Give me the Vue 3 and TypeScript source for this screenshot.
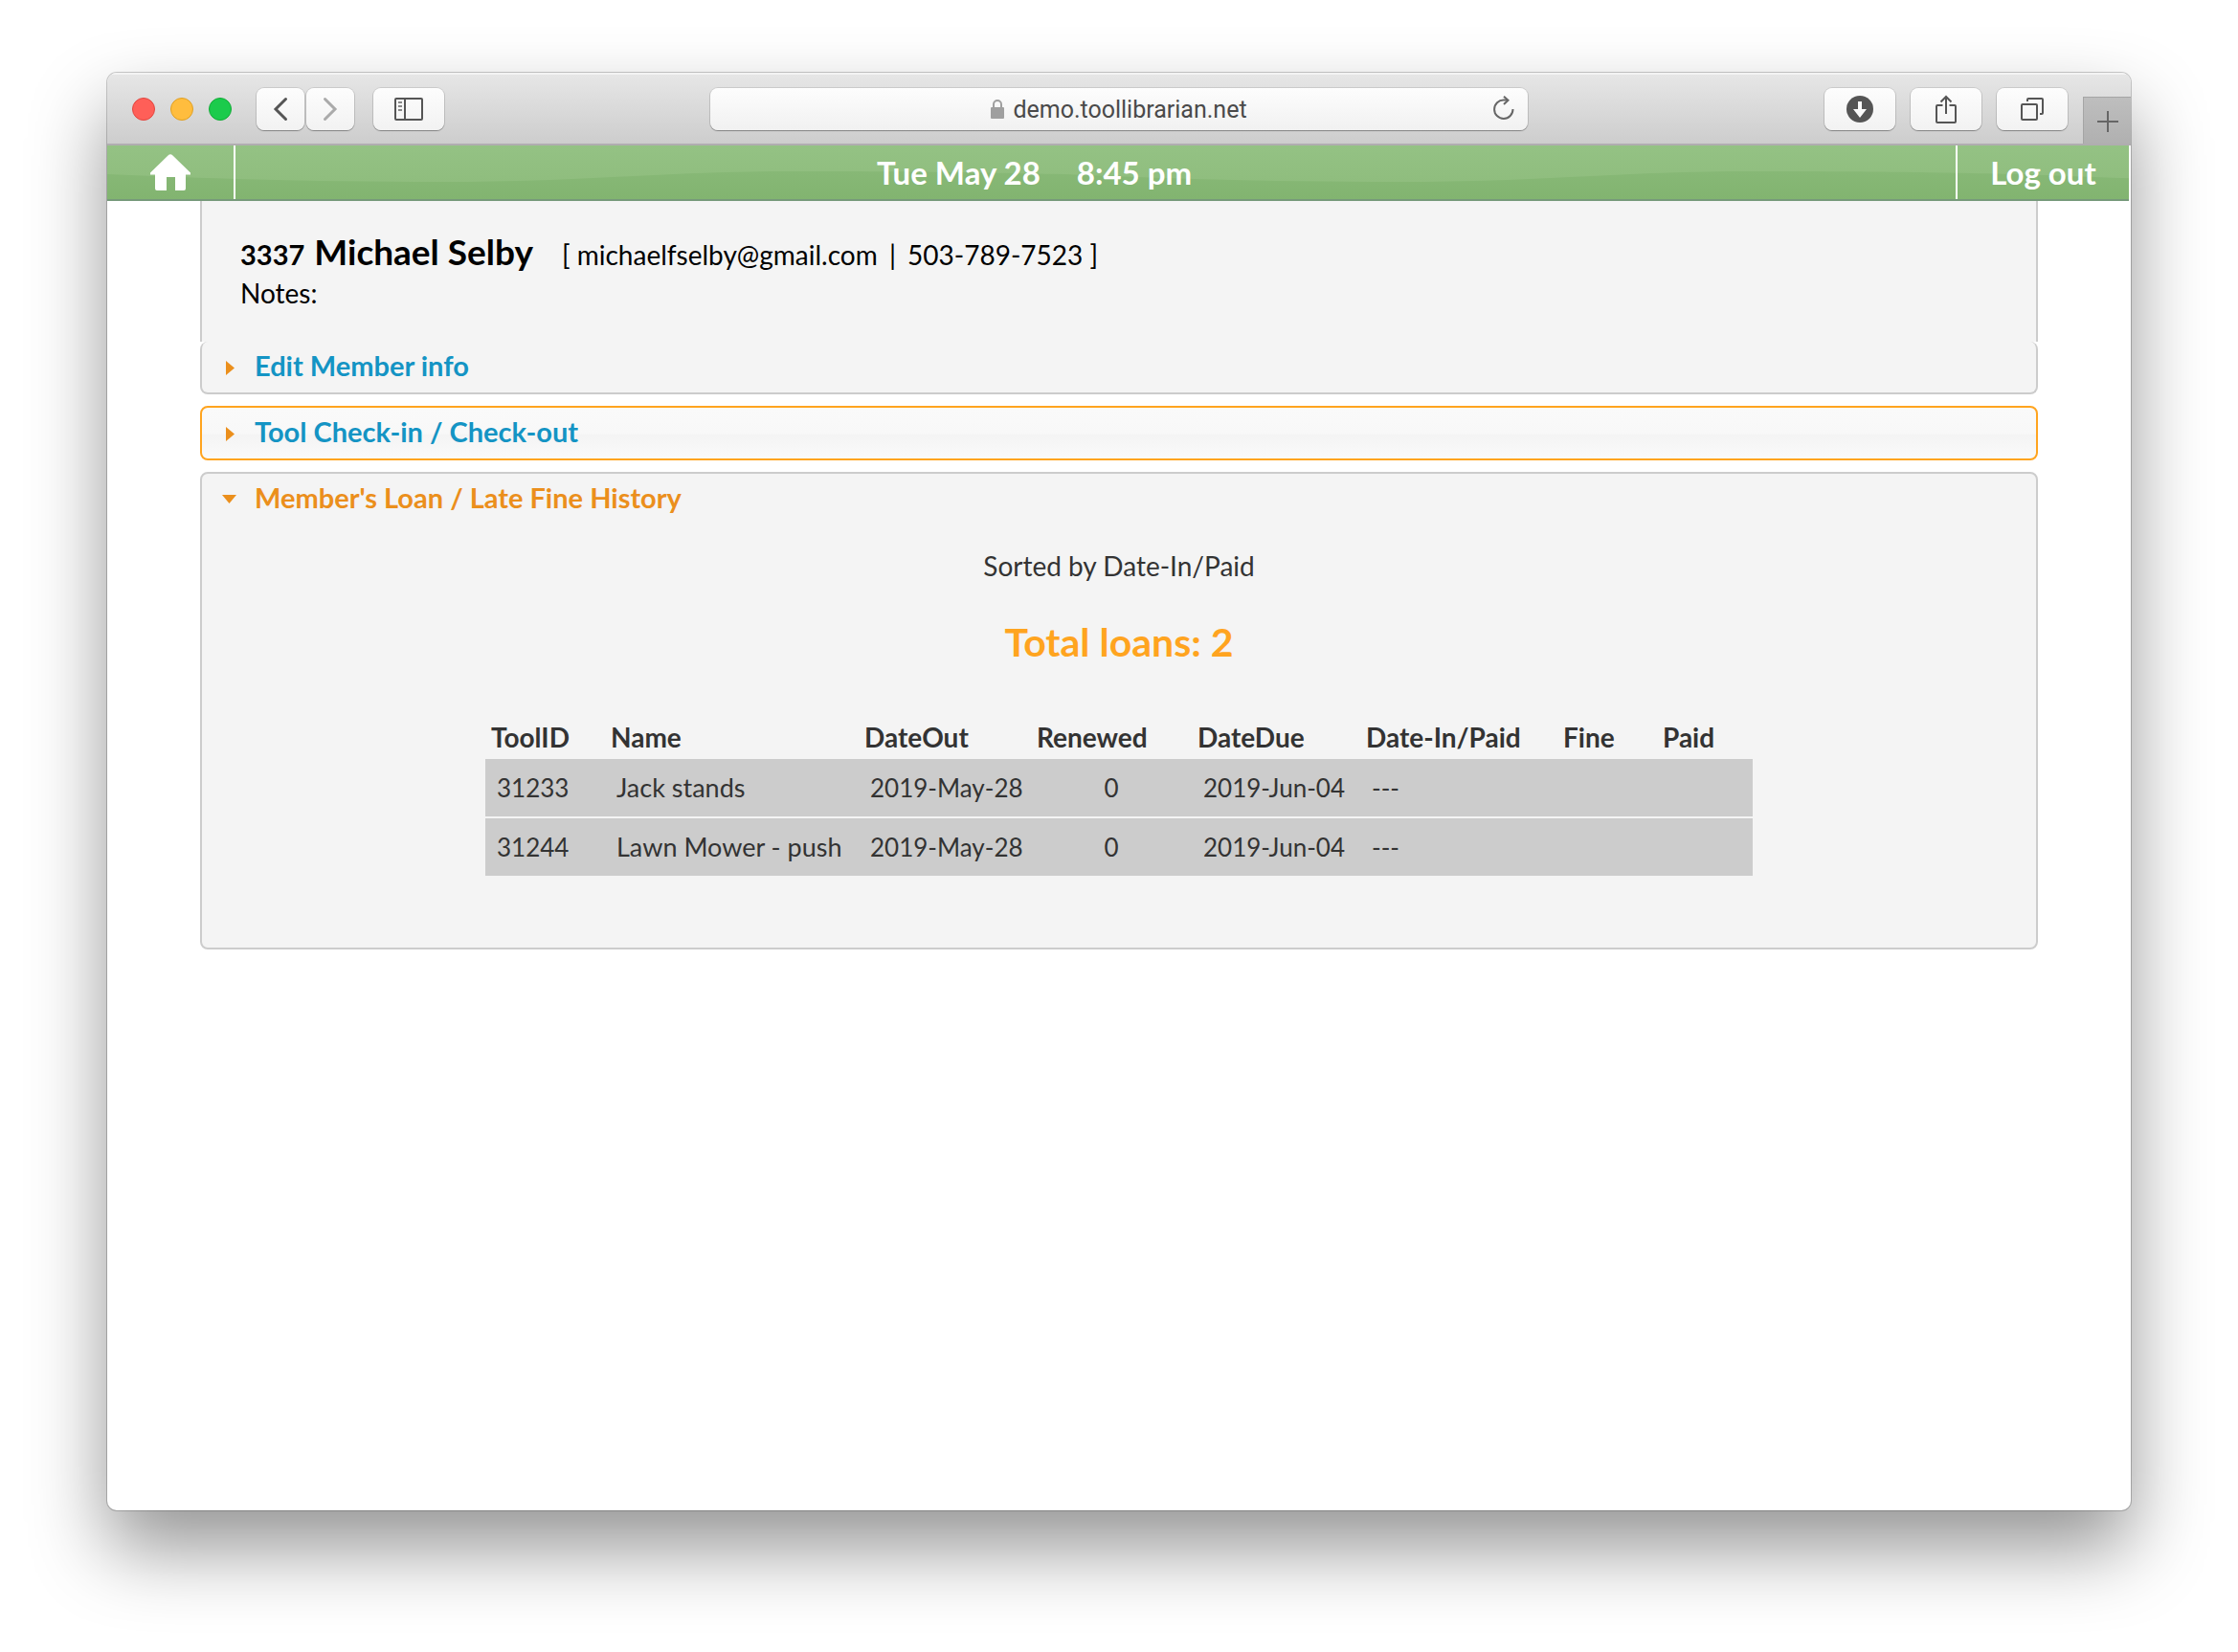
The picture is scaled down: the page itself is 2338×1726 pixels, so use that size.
<script setup lang="ts">
import { ref } from 'vue'

interface Loan {
  id: string
  name: string
  out: string
  renewed: number
  due: string
  returned: string
  fine: string
  paid: string
}

const columns = ['ToolID', 'Name', 'DateOut', 'Renewed', 'DateDue', 'Date-In/Paid', 'Fine', 'Paid']

const loans: Loan[] = [
  { id: '31233', name: 'Jack stands', out: '2019-May-28', renewed: 0, due: '2019-Jun-04', returned: '---', fine: '', paid: '' },
  { id: '31244', name: 'Lawn Mower - push', out: '2019-May-28', renewed: 0, due: '2019-Jun-04', returned: '---', fine: '', paid: '' },
]

const historyOpen = ref(true)
</script>

<template>
  <div class="desktop">
    <div class="window">
      <header class="toolbar">
        <div class="tools tools-left">
          <div class="lights">
            <button class="light red" aria-label="Close window"></button>
            <button class="light yellow" aria-label="Minimize window"></button>
            <button class="light green" aria-label="Zoom window"></button>
          </div>
          <div class="nav">
            <button class="tool narrow" aria-label="Back">
              <svg width="16" height="26" viewBox="0 0 16 26"><path d="M13.5 2.5 3 13l10.5 10.5" fill="none" stroke="#555" stroke-width="3" stroke-linecap="round" /></svg>
            </button>
            <button class="tool narrow" aria-label="Forward">
              <svg width="16" height="26" viewBox="0 0 16 26"><path d="M2.5 2.5 13 13 2.5 23.5" fill="none" stroke="#aaa" stroke-width="3" stroke-linecap="round" /></svg>
            </button>
          </div>
          <button class="tool" aria-label="Show sidebar">
            <svg width="30" height="24" viewBox="0 0 30 24">
              <rect x="1" y="1" width="28" height="22" rx="1" fill="none" stroke="#555" stroke-width="2" />
              <path d="M11 1v22" stroke="#555" stroke-width="2" />
              <path d="M4 5h4M4 9h4M4 13h4" stroke="#888" stroke-width="2" />
            </svg>
          </button>
        </div>

        <div class="address">
          <svg class="lock" width="14" height="22" viewBox="0 0 14 22">
            <path d="M3 9V6a4 4 0 0 1 8 0v3" fill="none" stroke="#9f9f9f" stroke-width="2" />
            <rect x="0" y="9" width="14" height="12" rx="1" fill="#9f9f9f" />
          </svg>
          <span>demo.toollibrarian.net</span>
          <button class="reload" aria-label="Reload page">
            <svg width="24" height="26" viewBox="0 0 24 26">
              <path d="M21.5 14A9.7 9.7 0 1 1 12 4.5h4" fill="none" stroke="#666" stroke-width="2" />
              <path d="M12 .8 16.5 4.8 12 9" fill="none" stroke="#666" stroke-width="2" />
            </svg>
          </button>
        </div>

        <div class="tools tools-right">
          <button class="tool" aria-label="Downloads">
            <svg width="28" height="28" viewBox="0 0 28 28">
              <circle cx="14" cy="14" r="14" fill="#555" />
              <path d="M12 6h4v8h5l-7 9-7-9h5z" fill="#fafafa" />
            </svg>
          </button>
          <button class="tool" aria-label="Share">
            <svg width="22" height="30" viewBox="0 0 22 30">
              <path d="M7.5 11H2a1 1 0 0 0-1 1v16a1 1 0 0 0 1 1h18a1 1 0 0 0 1-1V12a1 1 0 0 0-1-1h-5.500M11 20V2M5.500 7.500 11 2l5.500 5.500" fill="none" stroke="#555" stroke-width="2" />
            </svg>
          </button>
          <button class="tool" aria-label="Show all tabs">
            <svg width="24" height="24" viewBox="0 0 24 24">
              <rect x="1" y="7" width="16" height="16" rx="1" fill="none" stroke="#555" stroke-width="2" />
              <path d="M7 4V2a1 1 0 0 1 1-1h14a1 1 0 0 1 1 1v14a1 1 0 0 1-1 1h-2" fill="none" stroke="#555" stroke-width="2" />
            </svg>
          </button>
          <button class="new-tab" aria-label="New tab">
            <svg width="22" height="22" viewBox="0 0 22 22"><path d="M11 0v22M0 11h22" stroke="#666" stroke-width="2" /></svg>
          </button>
        </div>
      </header>

      <nav class="banner">
        <svg class="wave" width="100%" height="100%" aria-hidden="true">
          <defs>
            <linearGradient id="shade" x1="0" y1="0" x2="0" y2="1">
              <stop offset="0" stop-color="#87b876" />
              <stop offset="1" stop-color="#82b470" />
            </linearGradient>
            <pattern id="gloss" width="1000" height="56" patternUnits="userSpaceOnUse">
              <path d="M0 30C100 34 200 38 350 38C500 38 580 27 720 27C850 27 900 28 1000 30V56H0z" fill="url(#shade)" />
            </pattern>
          </defs>
          <rect width="100%" height="100%" fill="url(#gloss)" />
        </svg>
        <a class="home" href="#" aria-label="Home">
          <svg width="44" height="38" viewBox="0 0 44 38"><path d="M19.5 1.5q2.5-2.5 5 0L43 19.5v2h-5V36q0 2-2 2h-9V24h-9v14H8q-2 0-2-2V21.5H1v-2z" fill="#fff" /></svg>
        </a>
        <div class="clock"><span>Tue May 28</span><span>8:45 pm</span></div>
        <a class="logout" href="#">Log out</a>
      </nav>

      <main class="content">
        <section class="member">
          <h1 class="who">
            <span class="number">3337</span>
            <span class="name">Michael Selby</span>
            <span class="contact">[ michaelfselby@gmail.com <span class="divider">|</span> 503-789-7523 ]</span>
          </h1>
          <p class="notes">Notes:</p>
        </section>

        <section class="panel joined">
          <h2><button class="heading" aria-expanded="false">
            <svg class="arrow" width="16" height="22" viewBox="0 0 16 22"><path d="M4 6v15l9-7.500z" fill="#eb8f1c" /></svg>
            Edit Member info
          </button></h2>
        </section>

        <section class="panel hovered">
          <h2><button class="heading" aria-expanded="false">
            <svg class="arrow" width="16" height="22" viewBox="0 0 16 22"><path d="M4 6v15l9-7.500z" fill="#eb8f1c" /></svg>
            Tool Check-in / Check-out
          </button></h2>
        </section>

        <section class="panel">
          <h2><button class="heading active" :aria-expanded="historyOpen" @click="historyOpen = !historyOpen">
            <svg class="arrow" width="16" height="22" viewBox="0 0 16 22"><path d="M0 8h15l-7.500 9z" fill="#eb8f1c" /></svg>
            Member's Loan / Late Fine History
          </button></h2>
          <div v-if="historyOpen" class="history">
            <p class="sorted">Sorted by Date-In/Paid</p>
            <h3 class="total">Total loans: 2</h3>
            <table class="loans">
              <colgroup>
                <col class="c-id" /><col class="c-name" /><col class="c-out" /><col class="c-renewed" />
                <col class="c-due" /><col class="c-in" /><col class="c-fine" /><col class="c-paid" />
              </colgroup>
              <thead>
                <tr><th v-for="c in columns" :key="c" scope="col">{{ c }}</th></tr>
              </thead>
              <tbody>
                <tr v-for="l in loans" :key="l.id">
                  <td>{{ l.id }}</td>
                  <td class="tool-name">{{ l.name }}</td>
                  <td>{{ l.out }}</td>
                  <td class="center">{{ l.renewed }}</td>
                  <td>{{ l.due }}</td>
                  <td>{{ l.returned }}</td>
                  <td>{{ l.fine }}</td>
                  <td>{{ l.paid }}</td>
                </tr>
              </tbody>
            </table>
          </div>
        </section>
      </main>
    </div>
  </div>
</template>

<style>
body {
  background: #fff;
}
</style>

<style scoped>
* {
  box-sizing: border-box;
}

.desktop {
  min-height: 100vh;
  padding: 76px 112px 148px;
  font-family: "Trebuchet MS", Lato, sans-serif;
  font-size: 28px;
  color: #333;
}

.window {
  min-height: calc(100vh - 224px);
  border-radius: 10px;
  background: #fff;
  box-shadow: 0 0 0 1px rgba(0, 0, 0, 0.2), 0 40px 80px rgba(0, 0, 0, 0.42);
  overflow: hidden;
}

button {
  font: inherit;
  color: inherit;
  padding: 0;
  border: 0;
  cursor: pointer;
}

svg {
  display: block;
}

h1, h2, h3, p {
  margin: 0;
}

/* Browser toolbar */
.toolbar {
  display: grid;
  grid-template-columns: 630fr 854fr 630fr;
  align-items: center;
  height: 76px;
  border-top: 2px solid #f3f3f3;
  border-bottom: 2px solid #b0adb0;
  background: linear-gradient(#e6e6e6, #cdcdcd);
}

.tools {
  display: flex;
  align-items: center;
}

.tools-left {
  gap: 20px;
  padding-left: 26px;
}

.lights {
  display: flex;
  gap: 16px;
  margin-right: 6px;
}

.light {
  width: 24px;
  height: 24px;
  border-radius: 50%;
}

.red {
  background: #ff5f58;
  border: 1px solid #e2463f;
}

.yellow {
  background: #ffbd3e;
  border: 1px solid #dfa023;
}

.green {
  background: #1bcb4c;
  border: 1px solid #12ac36;
}

.nav {
  display: flex;
  gap: 2px;
}

.tool {
  display: flex;
  align-items: center;
  justify-content: center;
  width: 74px;
  height: 44px;
  border-radius: 8px;
  background: linear-gradient(#fdfdfd, #f2f2f2);
  box-shadow: 0 0 0 1px rgba(0, 0, 0, 0.1), 0 1px 1px rgba(0, 0, 0, 0.3);
}

.narrow {
  width: 50px;
}

.address {
  position: relative;
  display: flex;
  align-items: center;
  justify-content: center;
  gap: 9px;
  height: 44px;
  padding-top: 2px;
  border-radius: 8px;
  background: linear-gradient(#fdfdfd, #f1f1f1);
  box-shadow: 0 0 0 1px rgba(0, 0, 0, 0.1), 0 1px 1px rgba(0, 0, 0, 0.3);
  font: 25px/42px Roboto, sans-serif;
  color: #4a4a4a;
}

.lock {
  margin-bottom: 2px;
}

.reload {
  position: absolute;
  top: 8px;
  right: 13px;
  background: none;
}

.tools-right {
  justify-content: flex-end;
  align-self: stretch;
  gap: 16px;
}

.new-tab {
  display: flex;
  align-items: center;
  justify-content: center;
  align-self: flex-end;
  width: 50px;
  height: 49px;
  padding-top: 2px;
  border-top: 1px solid #a5a5a5;
  border-left: 1px solid #a5a5a5;
  background: linear-gradient(#bebebe, #b0b0b0);
}

/* Site banner */
.banner {
  position: relative;
  display: flex;
  height: 58px;
  margin-right: 2px;
  border-bottom: 2px solid #76997a;
  background: linear-gradient(#94c284, #8dbb7b);
  color: #fff;
  font-size: 33px;
  font-weight: 700;
  line-height: 56px;
}

.wave {
  position: absolute;
  inset: 0;
}

.home,
.clock,
.logout {
  position: relative;
  display: flex;
  align-items: center;
  justify-content: center;
}

.home {
  width: 134px;
  border-right: 2px solid #fff;
}

.clock {
  flex: 1;
  gap: 38px;
  padding-right: 128px;
}

.logout {
  width: 181px;
  border-left: 2px solid #fff;
  color: inherit;
  text-decoration: none;
}

/* Page content */
.content {
  padding: 0 97px 40px;
}

.member {
  padding: 30px 40px 31px;
  border: solid #ccc;
  border-width: 0 2px;
  background: #f4f4f4;
  color: #000;
}

.who {
  display: flex;
  align-items: baseline;
  font-size: 37px;
  line-height: 46px;
}

.number {
  margin-right: 10px;
  font-size: 29px;
  line-height: 36px;
}

.contact {
  margin-left: 30px;
  font-size: 28px;
  font-weight: 400;
  line-height: 36px;
}

.divider {
  margin: 0 5px;
}

.notes {
  line-height: 40px;
}

.panel {
  margin-top: 12px;
  border: 2px solid #ccc;
  border-radius: 8px;
  background: #f4f4f4;
}

.joined {
  margin-top: 0;
  border-top: 0;
}

.hovered {
  border-color: #ffa41f;
  background: linear-gradient(#fafafa, #f8f8f8 50%, #f4f4f4 55%, #fafafa);
}

.heading {
  display: flex;
  align-items: center;
  gap: 18px;
  width: 100%;
  padding: 0 21px 3px;
  background: none;
  color: #1494c4;
  font-size: 29px;
  font-weight: 700;
  line-height: 50px;
}

.active {
  color: #eb8f1c;
}

.history {
  padding: 23px 0 75px;
  text-align: center;
}

.sorted {
  line-height: 40px;
}

.total {
  margin-top: 30px;
  font-size: 41px;
  line-height: 60px;
  color: #ffa41f;
}

.loans {
  width: 1324px;
  max-width: 100%;
  margin: 46px auto 0;
  border-spacing: 0;
  table-layout: fixed;
  text-align: left;
}

.c-id { width: 125px; }
.c-name { width: 265px; }
.c-out { width: 180px; }
.c-renewed { width: 168px; }
.c-due { width: 176px; }
.c-in { width: 206px; }
.c-fine { width: 104px; }
.c-paid { width: 100px; }

.loans th {
  padding: 0 6px;
  line-height: 46px;
}

.loans td {
  padding: 0 12px;
  background: #ccc;
  font-size: 26px;
  line-height: 60px;
  white-space: nowrap;
}

.loans .tool-name {
  font-size: 27px;
}

.loans tr + tr td {
  border-top: 2px solid #f4f4f4;
}

.loans .center {
  text-align: center;
}
</style>
